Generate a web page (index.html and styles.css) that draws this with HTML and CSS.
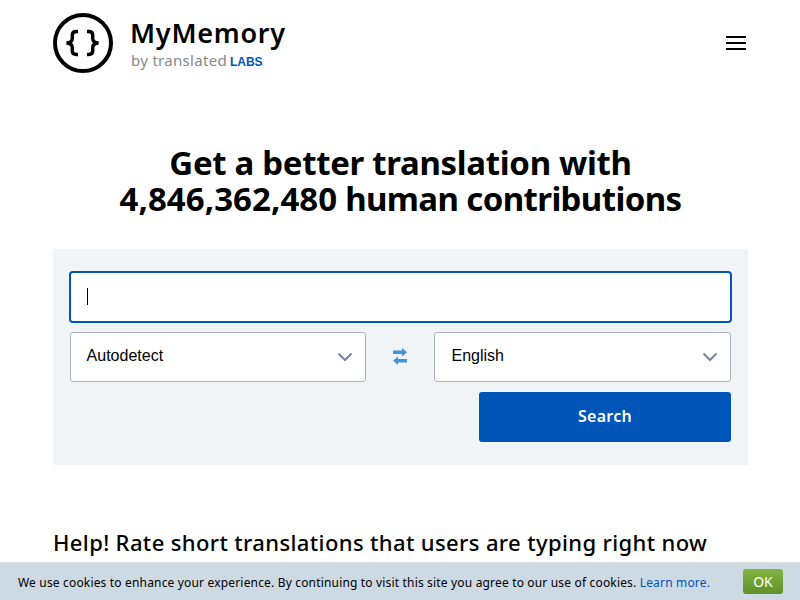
FILE: index.html
```html
<!DOCTYPE html>
<html lang="en">
<head>
<meta charset="utf-8">
<title>MyMemory</title>
<link rel="stylesheet" href="styles.css">
</head>
<body>
<header class="header">
  <a class="brand">
    <svg class="brand-icon" width="60" height="60" viewBox="0 0 60 60" fill="none" stroke="#000">
      <circle cx="30" cy="30" r="28" stroke-width="4"/>
      <path d="M25 18.500H23.500Q19.300 18.500 19.300 22V25.500Q19.300 29.500 13.500 30Q19.300 30.500 19.300 34.500V38Q19.300 41.500 23.500 41.500H25" stroke-width="3.400"/>
      <path d="M34 18.500H35.500Q39.700 18.500 39.700 22V25.500Q39.700 29.500 45.500 30Q39.700 30.500 39.700 34.500V38Q39.700 41.500 35.500 41.500H34" stroke-width="3.400"/>
    </svg>
    <span class="brand-text">
      <span class="brand-name">MyMemory</span>
      <span class="brand-by"><span class="by">by translated</span><b class="labs">LABS</b></span>
    </span>
  </a>
  <div class="menu"><i></i><i></i><i></i></div>
</header>
<main class="main">
  <h1 class="title"><span class="line-one">Get a better translation with</span><span class="line-two"><span class="count">4,846,362,480</span> human contributions</span></h1>
  <section class="search">
    <div class="query"><span class="caret"></span></div>
    <div class="languages">
      <div class="select">Autodetect
        <svg width="16" height="10" viewBox="0 0 16 10"><path d="M1.500 1.500L8 8L14.500 1.500" fill="none" stroke="#76869a" stroke-width="2"/></svg>
      </div>
      <svg class="swap" width="14" height="17" viewBox="0 0 14 17" fill="#4394d6"><path d="M0 2.500H9V0L14 4.200L9 8.500V6H0ZM14 11H5V8.500L0 12.700L5 17V14.500H14Z"/></svg>
      <div class="select">English
        <svg width="16" height="10" viewBox="0 0 16 10"><path d="M1.500 1.500L8 8L14.500 1.500" fill="none" stroke="#76869a" stroke-width="2"/></svg>
      </div>
    </div>
    <div class="submit">Search</div>
  </section>
  <h2 class="help">Help! Rate short translations that users are typing right now</h2>
</main>
<footer class="cookies">
  <p class="notice"><span class="message">We use cookies to enhance your experience. By continuing to visit this site you agree to our use of cookies.</span> <a class="learn">Learn more.</a></p>
  <div class="ok">OK</div>
</footer>
</body>
</html>
```
FILE: styles.css
```css
* { box-sizing: border-box; }
html, body { height: 100%; }
body {
  margin: 0;
  display: flex;
  flex-direction: column;
  overflow: hidden;
  background: #fff;
  color: #000;
  font-family: "Noto Sans", sans-serif;
  white-space: nowrap;
}
.header {
  flex: none;
  height: 86px;
  padding: 0 54px 0 53px;
  display: flex;
  align-items: center;
  justify-content: space-between;
}
.brand { display: flex; gap: 18px; }
.brand-text { display: flex; flex-direction: column; padding-top: 3px; }
.brand-name { font-size: 27px; line-height: 34px; font-weight: 600; letter-spacing: 0.75px; margin-left: -1px; }
.brand-by { display: flex; align-items: baseline; gap: 3px; line-height: 20px; }
.by { font-size: 15px; color: #888; letter-spacing: 0.3px; }
.labs { font: bold 12px "Liberation Sans", sans-serif; color: #0055b8; letter-spacing: 0; }
.menu { width: 20px; display: grid; gap: 4px; }
.menu i { height: 2px; background: #000; }
.main { flex: 1; min-height: 0; padding: 59px 52px 0 53px; }
.title {
  margin: 0 0 32px;
  text-align: center;
  font-size: 33px;
  line-height: 36px;
  font-weight: 700;
}
.line-one, .line-two { display: block; }
.line-one { letter-spacing: -0.32px; }
.line-two { letter-spacing: -0.62px; }
.count { letter-spacing: 0.05px; }
.search {
  height: 216px;
  padding: 22px 16px 0;
  background: #f0f4f7;
  display: flex;
  flex-direction: column;
}
.query {
  height: 52px;
  border: 2px solid #0055b8;
  border-radius: 4px;
  background: #fff;
  padding: 15px 16px;
}
.caret { display: block; width: 1px; height: 17px; background: #000; }
.languages {
  margin: 9px 1px 10px;
  display: flex;
  align-items: center;
  justify-content: space-between;
}
.swap { position: relative; top: -1px; }
.select {
  width: 297px;
  height: 50px;
  padding: 0 12px 3px 16.500px;
  border: 1px solid #aab3bd;
  border-radius: 3px;
  background: #fff;
  display: flex;
  align-items: center;
  justify-content: space-between;
  font: 16px "Liberation Sans", sans-serif;
}
.select svg { position: relative; top: 1px; }
.select:first-child { width: 296px; padding-left: 15.600px; }
.submit {
  width: 252px;
  height: 50px;
  margin-right: 1px;
  align-self: flex-end;
  border-radius: 3px;
  background: #0055b8;
  color: #fff;
  font-size: 16px;
  font-weight: 600;
  letter-spacing: 0.3px;
  line-height: 49px;
  text-align: center;
}
.help { margin: 62px 0 0; font-size: 22px; font-weight: 500; line-height: 30px; letter-spacing: 0.37px; }
.cookies {
  flex: none;
  height: 38px;
  padding: 0 17px 0 18px;
  border-top: 1px solid #d9dcdd;
  background: #cdd9e3;
  display: flex;
  align-items: center;
  justify-content: space-between;
}
.notice { margin: 2px 0 0; font-size: 12px; letter-spacing: 0.17px; }
.learn { color: #0055b8; }
.ok {
  width: 40px;
  height: 25px;
  border-radius: 3px;
  background: linear-gradient(#84b541, #608f2a);
  color: #fff;
  font-size: 14px;
  line-height: 25px;
  text-align: center;
}
```
